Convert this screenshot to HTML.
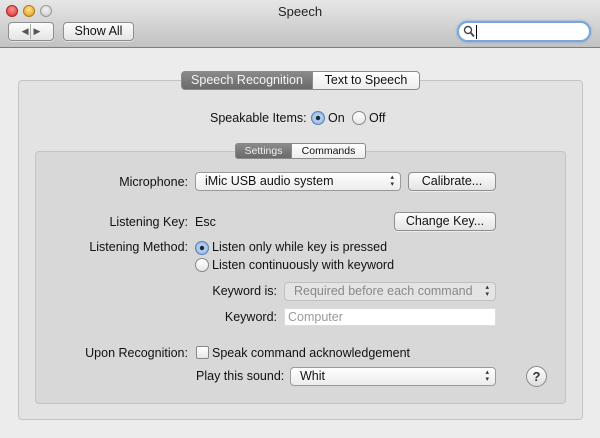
<!DOCTYPE html>
<html><head><style>
*{box-sizing:border-box;margin:0;padding:0}
body{width:600px;height:438px;background:#ececec;font-family:"Liberation Sans",sans-serif;font-size:12.5px;color:#111;position:relative;overflow:hidden}
.a{position:absolute;white-space:nowrap}
.tb{position:absolute;left:0;top:0;width:600px;height:48px;background:linear-gradient(#e6e6e6,#c2c2c2);border-bottom:1px solid #7e7e7e}
.dot{position:absolute;width:12px;height:12px;border-radius:50%;top:5px}
.btn{position:absolute;border:1px solid #8e8e8e;border-radius:4px;background:linear-gradient(#fdfdfd,#e4e4e4);text-align:center;line-height:17px;box-shadow:0 1px 0 rgba(255,255,255,.5)}
.pop{position:absolute;border:1px solid #9a9a9a;border-radius:4px;background:linear-gradient(#fff,#ececec);line-height:17px;padding-left:9px}
.pop:after{content:"\25B4\A\25BE";white-space:pre;position:absolute;right:6px;top:1px;font-size:7px;line-height:7px;color:#333}
.box{position:absolute;border:1px solid #c4c4c4;border-radius:4px}
.tab{position:absolute;border:1px solid #8a8a8a;text-align:center}
.rad{position:absolute;width:14px;height:14px;border-radius:50%;border:1px solid #888;background:linear-gradient(#fff,#e6e6e6)}
.rad.on{background:radial-gradient(#1c2a44 0 2px,#bcd6f2 2.5px,#7aa8dc);border-color:#5a7fb0}
.r{text-align:right}
</style></head><body>
<div class="tb"></div>
<div class="dot" style="left:6px;background:radial-gradient(circle at 50% 35%,#ff9a8f,#d8262a);border:1px solid #a8282a"></div>
<div class="dot" style="left:23px;background:radial-gradient(circle at 50% 35%,#ffe08a,#e09a16);border:1px solid #b07a1e"></div>
<div class="dot" style="left:40px;background:radial-gradient(circle at 50% 35%,#f4f4f4,#c6c6c6);border:1px solid #9a9a9a"></div>
<div class="a" style="left:0;width:600px;text-align:center;top:4px;font-size:13px;color:#222">Speech</div>
<div class="btn" style="left:8px;top:22px;width:46px;height:19px;font-size:9px;color:#555">◀ &nbsp;▶</div>
<div class="a" style="left:30px;top:24px;width:1px;height:15px;background:#aaa"></div>
<div class="btn" style="left:63px;top:22px;width:71px;height:19px">Show All</div>
<div class="a" style="left:457px;top:21px;width:134px;height:21px;border-radius:11px;border:2px solid #7aa6da;background:#fff;box-shadow:0 0 2px #6b9ad6"></div>
<svg class="a" style="left:463px;top:25px" width="12" height="13"><circle cx="5" cy="5" r="3.5" fill="none" stroke="#444" stroke-width="1.4"/><line x1="7.5" y1="7.5" x2="11" y2="11.5" stroke="#444" stroke-width="1.8"/></svg>
<div class="a" style="left:476px;top:25px;width:1px;height:14px;background:#000"></div>

<div class="box" style="left:18px;top:80px;width:565px;height:340px;background:#e3e3e3"></div>
<div class="tab" style="left:181px;top:71px;width:132px;height:19px;border-radius:4px 0 0 4px;background:linear-gradient(#8a8a8a,#6a6a6a);color:#f4f4f4;line-height:17px">Speech Recognition</div>
<div class="tab" style="left:312px;top:71px;width:108px;height:19px;border-radius:0 4px 4px 0;background:linear-gradient(#fff,#ececec);line-height:17px">Text to Speech</div>

<div class="a" style="left:210px;top:111px">Speakable Items:</div>
<div class="rad on" style="left:311px;top:111px"></div>
<div class="a" style="left:328px;top:111px">On</div>
<div class="rad" style="left:352px;top:111px"></div>
<div class="a" style="left:369px;top:111px">Off</div>

<div class="box" style="left:35px;top:151px;width:531px;height:253px;background:#d8d8d8"></div>
<div class="tab" style="left:235px;top:143px;width:57px;height:16px;border-radius:3px 0 0 3px;background:linear-gradient(#8a8a8a,#6a6a6a);color:#eee;font-size:10.5px;line-height:14px">Settings</div>
<div class="tab" style="left:291px;top:143px;width:75px;height:16px;border-radius:0 3px 3px 0;background:linear-gradient(#fff,#ececec);font-size:10.5px;line-height:14px">Commands</div>

<div class="a r" style="left:60px;width:128px;top:175px">Microphone:</div>
<div class="pop" style="left:195px;top:172px;width:206px;height:19px">iMic USB audio system</div>
<div class="btn" style="left:408px;top:172px;width:88px;height:19px">Calibrate...</div>

<div class="a r" style="left:60px;width:128px;top:215px">Listening Key:</div>
<div class="a" style="left:195px;top:215px">Esc</div>
<div class="btn" style="left:394px;top:212px;width:102px;height:19px">Change Key...</div>

<div class="a r" style="left:40px;width:148px;top:240px">Listening Method:</div>
<div class="rad on" style="left:195px;top:241px"></div>
<div class="a" style="left:212px;top:240px">Listen only while key is pressed</div>
<div class="rad" style="left:195px;top:258px"></div>
<div class="a" style="left:212px;top:258px">Listen continuously with keyword</div>

<div class="a r" style="left:150px;width:127px;top:284px">Keyword is:</div>
<div class="pop" style="left:284px;top:282px;width:212px;height:19px;color:#888;border-color:#c0c0c0;background:#e4e4e4">Required before each command</div>
<div class="a r" style="left:150px;width:127px;top:310px">Keyword:</div>
<div class="a" style="left:284px;top:308px;width:212px;height:18px;background:#fff;border:1px solid #ddd;color:#999;padding-left:3px;line-height:16px">Computer</div>

<div class="a r" style="left:40px;width:148px;top:346px">Upon Recognition:</div>
<div class="a" style="left:196px;top:346px;width:13px;height:13px;border:1px solid #888;border-radius:2px;background:linear-gradient(#fff,#e6e6e6)"></div>
<div class="a" style="left:212px;top:346px">Speak command acknowledgement</div>
<div class="a" style="left:196px;top:369px">Play this sound:</div>
<div class="pop" style="left:290px;top:367px;width:206px;height:19px">Whit</div>

<div class="a" style="left:526px;top:366px;width:21px;height:21px;border-radius:50%;border:1px solid #888;background:linear-gradient(#fff,#ddd);text-align:center;line-height:19px;font-weight:bold;font-size:13px;color:#333">?</div>
</body></html>
